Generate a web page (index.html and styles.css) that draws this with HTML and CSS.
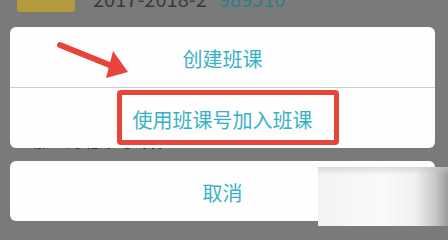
FILE: index.html
```html
<!DOCTYPE html>
<html lang="zh-CN">
<head>
<meta charset="utf-8">
<title>班课</title>
<link rel="stylesheet" href="styles.css">
</head>
<body>
<div class="page">
  <div class="course">
    <div class="cover"></div>
    <div class="meta"><span class="term">2017-2018-2</span><span class="code">989510</span></div>
  </div>
  <div class="section">已加入的班课 号课件</div>

  <div class="sheet">
    <div class="group">
      <div class="item">创建班课</div>
      <div class="divider"></div>
      <div class="item">使用班课号加入班课</div>
    </div>
    <div class="group">
      <div class="item">取消</div>
    </div>
  </div>

  <div class="highlight"></div>
  <svg class="arrow" width="80" height="45" viewBox="0 0 80 45">
    <line x1="3" y1="9" x2="55" y2="30" stroke="#e8453a" stroke-width="6" stroke-linecap="round"/>
    <polygon points="56,15 71,36 49,42" fill="#e8453a"/>
  </svg>
  <div class="watermark"></div>
</div>
</body>
</html>
```
FILE: styles.css
```css
html, body {
  margin: 0;
  padding: 0;
}
body {
  background: #7a7a7a;
  font-family: "Noto Sans CJK SC", "Noto Sans", sans-serif;
}
.page {
  position: relative;
  width: 448px;
  height: 226px;
  overflow: hidden;
  background: #7a7a7a;
}
.course {
  display: flex;
  align-items: flex-end;
  margin-top: -46px;
  padding-left: 17px;
}
.cover {
  width: 58px;
  height: 58px;
  border-radius: 3px;
  background: #b39a3c;
}
.meta {
  margin-left: 18px;
  font-size: 20px;
  line-height: 20px;
  margin-bottom: 3px;
  display: flex;
  gap: 12px;
}
.term {
  color: #393939;
}
.code {
  color: #2b7e8a;
}
.section {
  margin-top: 118px;
  padding-left: 18px;
  font-size: 16px;
  line-height: 20px;
  font-weight: 700;
  color: #1e1e1e;
}
.sheet {
  position: absolute;
  left: 10px;
  top: 27px;
  width: 425px;
  display: flex;
  flex-direction: column;
  gap: 13px;
}
.group {
  background: #fefefe;
  border-radius: 6px;
  overflow: hidden;
}
.item {
  height: 60px;
  display: flex;
  align-items: center;
  justify-content: center;
  font-size: 20px;
  color: #38b1c5;
  padding-top: 2px;
  box-sizing: border-box;
}
.divider {
  height: 1px;
  background: #cfcfcf;
}
.highlight {
  position: absolute;
  left: 117px;
  top: 90px;
  width: 222px;
  height: 55px;
  box-sizing: border-box;
  border: 5px solid #e8453a;
  border-radius: 4px;
}
.arrow {
  position: absolute;
  left: 57px;
  top: 36px;
}
.watermark {
  position: absolute;
  left: 318px;
  top: 167px;
  width: 130px;
  height: 59px;
  background:
    linear-gradient(to bottom, rgba(200,200,200,0.6) 0px, rgba(255,255,255,0) 8px),
    linear-gradient(to right, #f3f3f3 0%, #fafafa 50%, #f0f0f0 75%, #c8c8c8 90%, #9c9c9c 100%);
}
```
